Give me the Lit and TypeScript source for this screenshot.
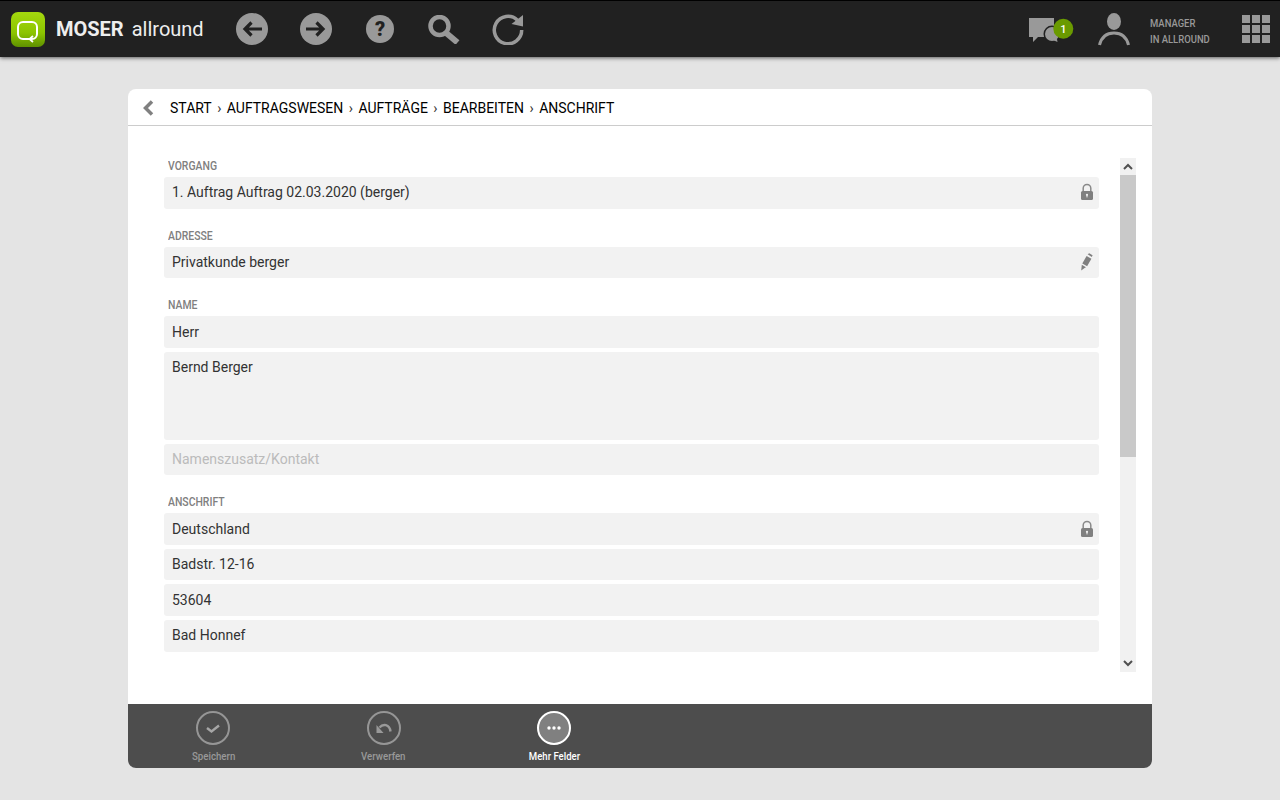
import { LitElement, html, css, svg } from "lit";
import { customElement } from "lit/decorators.js";

const lock = svg`<svg class="ficon" width="14" height="18" viewBox="0 0 14 18"><path d="M3.2 8V5.2a3.8 3.8 0 0 1 7.6 0V8" fill="none" stroke="#8a8a8a" stroke-width="1.5"/><rect x="1" y="8" width="12" height="9" rx="1.5" fill="#808080"/><circle cx="7" cy="11.8" r="1.1" fill="#f2f2f2"/><rect x="6.5" y="12" width="1" height="2.4" fill="#f2f2f2"/></svg>`;
const pencil = svg`<svg class="ficon" width="16" height="18" viewBox="0 0 16 18"><path d="M9.6 1.2l1.6-.9 3.4 2-.8 1.6z" fill="#808080"/><path d="M8.6 3l4.8 2.8-4.3 7.4-4.8-2.8z" fill="#808080"/><path d="M3.8 11.8l4.2 2.4-1.4.9-3.4 2.3z" fill="#808080"/></svg>`;

@customElement("app-root")
export class AppRoot extends LitElement {
  static styles = css`
    :host { display: block; width: 1280px; height: 800px; background: #e4e4e4; font-family: Roboto, sans-serif; overflow: hidden; color: #333; }
    .top { height: 56px; background: #212121; border-top: 1px solid #000; display: flex; align-items: center; box-shadow: 0 1px 4px rgba(0,0,0,.6); }
    .logo { margin-left: 11px; width: 34px; height: 35px; flex: none; display: block; }
    .brand { margin-left: 11px; font-size: 20px; color: #eee; width: 180px; white-space: nowrap; display: flex; gap: 8px; }
    .brand b { font-weight: 700; }
    .nav { display: flex; align-items: center; flex: 1; }
    .nav svg { display: block; flex: none; }
    .right { display: flex; align-items: center; }
    .mgr { font-size: 11px; line-height: 16px; color: #999; width: 92px; margin-left: 20px; padding-top: 6px; font-weight: 500; transform: scaleX(.86); transform-origin: left center; white-space: nowrap; }
    .grid9 { display: grid; grid-template-columns: repeat(3, 8px); gap: 2.2px; margin-right: 10px; }
    .grid9 i { height: 8px; background: #999; display: block; }

    .card { width: 1024px; height: 679px; margin: 32px auto 0; background: #fff; border-radius: 8px; display: flex; flex-direction: column; overflow: hidden; }
    .crumb { height: 35px; padding-top: 1px; border-bottom: 1px solid #ccc; display: flex; align-items: center; flex: none; font-size: 14px; color: #000; box-sizing: content-box; }
    .crumb svg { margin-left: 14px; margin-right: 16px; flex: none; }
    .crumb .sep { margin: 0 5.45px; color: #333; }
    .body { flex: 1; min-height: 0; display: flex; padding: 32px 16px 32px 36px; }
    .form { width: 935px; overflow: hidden; flex: none; padding-top: .95px; box-sizing: border-box; }
    .label { font-size: 12px; line-height: 15px; height: 15px; color: #808080; margin-left: 4px; margin-bottom: 3px; font-weight: 500; transform: scaleX(.87); transform-origin: left center; }
    .sec { margin-bottom: 20px; }
    .field { height: 31.6px; background: #f2f2f2; border-radius: 3px; display: flex; align-items: center; justify-content: space-between; padding: 0 4px .8px 8px; font-size: 14px; color: #333; box-sizing: border-box; }
    .field + .field { margin-top: 4px; }
    .tall { height: 87.9px; align-items: flex-start; padding-top: 7px; }
    .ph { color: #bbb; }
    .ficon { display: block; margin-right: 1px; flex: none; }
    .sb { width: 16px; margin-left: 21px; background: #f1f1f1; display: flex; flex-direction: column; justify-content: space-between; position: relative; flex: none; }
    .thumb { position: absolute; left: 0; right: 0; top: 17px; height: 282px; background: #c9c9c9; }
    .arrow { height: 17px; display: flex; align-items: center; justify-content: center; }
    .foot { height: 64px; flex: none; background: #4d4d4d; display: grid; grid-template-columns: repeat(6, 170.4px); }
    .btn { display: flex; flex-direction: column; align-items: center; padding-top: 7px; font-size: 11px; color: #999; font-weight: 500; }
    .btn .c { width: 34px; height: 34px; border-radius: 50%; border: 2px solid #969696; box-sizing: border-box; display: flex; align-items: center; justify-content: center; }
    .btn span { margin-top: 6px; line-height: 12px; transform: scaleX(.88); white-space: nowrap; }
    .btn.on { color: #fff; }
    .btn.on span { transform: scaleX(.87); }
    .btn.on .c { border-color: #fff; background: #808080; }
  `;

  render() {
    return html`
      <div class="top">
        <svg class="logo" viewBox="0 0 34 35">
          <defs><linearGradient id="lg" x1="0" y1="0" x2="0" y2="1"><stop offset="0" stop-color="#a4d80e"/><stop offset=".6" stop-color="#8cc400"/><stop offset="1" stop-color="#5e9000"/></linearGradient></defs>
          <rect width="34" height="35" rx="7" fill="url(#lg)"/>
          <path d="M18 27H12a5 5 0 0 1-5-5V15a5 5 0 0 1 5-5h9a5 5 0 0 1 5 5v7a5 5 0 0 1-5 5h-3" fill="none" stroke="#fff" stroke-width="2"/>
          <path d="M22 24l-3.500 3 3.500 3" fill="none" stroke="#fff" stroke-width="1.800"/>
        </svg>
        <div class="brand"><b>MOSER</b><span>allround</span></div>
        <div class="nav">
          <svg width="32" height="32" viewBox="0 0 32 32"><circle cx="16" cy="16" r="16" fill="#999"/><path d="M26 16H9M15.500 9.500L9 16l6.500 6.500" fill="none" stroke="#212121" stroke-width="3.200"/></svg>
          <svg style="margin-left:32px" width="32" height="32" viewBox="0 0 32 32"><circle cx="16" cy="16" r="16" fill="#999"/><path d="M6 16h17M16.500 9.500L23 16l-6.500 6.500" fill="none" stroke="#212121" stroke-width="3.200"/></svg>
          <svg style="margin-left:34px" width="28" height="28" viewBox="0 0 28 28"><circle cx="14" cy="14" r="14" fill="#999"/><text x="14" y="21" text-anchor="middle" font-family="Roboto, sans-serif" font-weight="900" font-size="20" fill="#212121">?</text></svg>
          <svg style="margin-left:34px" width="32" height="29" viewBox="0 0 32 29"><circle cx="11.500" cy="11" r="9" fill="none" stroke="#999" stroke-width="4.500"/><path d="M17 17l12.500 10.500" stroke="#999" stroke-width="6"/></svg>
          <svg style="margin-left:32px" width="33" height="31" viewBox="0 0 33 31"><path d="M25.500 6.200A13.700 13.700 0 1 0 29.700 16" fill="none" stroke="#999" stroke-width="3.500"/><path d="M31 1v11.500L19.500 10z" fill="#999"/></svg>
        </div>
        <div class="right">
          <svg width="45" height="28" viewBox="0 0 45 28" style="margin-right:24px">
            <path d="M0 3h25v19H9l-5 5v-5H0z" fill="#999"/>
            <circle cx="23" cy="19" r="8.500" fill="#212121"/>
            <circle cx="23" cy="19" r="7" fill="#999"/>
            <path d="M24 25l4.500 2-1-5z" fill="#999"/>
            <circle cx="34.300" cy="13.700" r="10" fill="#6a9a00"/>
            <text x="34.300" y="17.700" text-anchor="middle" font-family="Roboto, sans-serif" font-size="11" font-weight="500" fill="#fff">1</text>
          </svg>
          <svg width="32" height="33" viewBox="0 0 32 33" style="margin-top:1px">
            <ellipse cx="16" cy="8.500" rx="7" ry="8.500" fill="#999"/>
            <path d="M1.500 32c2-8 7.500-12 14.500-12s12.500 4 14.500 12" fill="none" stroke="#999" stroke-width="3"/>
          </svg>
          <div class="mgr">MANAGER<br />IN ALLROUND</div>
          <div class="grid9">${Array.from({ length: 9 }, () => html`<i></i>`)}</div>
        </div>
      </div>

      <div class="card">
        <div class="crumb">
          <svg width="12" height="16" viewBox="0 0 12 16"><path d="M10 1.500L3.500 8l6.500 6.500" fill="none" stroke="#808080" stroke-width="3.500"/></svg>
          START<span class="sep">›</span>AUFTRAGSWESEN<span class="sep">›</span>AUFTRÄGE<span class="sep">›</span>BEARBEITEN<span class="sep">›</span>ANSCHRIFT
        </div>
        <div class="body">
          <div class="form">
            <div class="sec">
              <div class="label">VORGANG</div>
              <div class="field">1. Auftrag Auftrag 02.03.2020 (berger)${lock}</div>
            </div>
            <div class="sec">
              <div class="label">ADRESSE</div>
              <div class="field">Privatkunde berger${pencil}</div>
            </div>
            <div class="sec">
              <div class="label">NAME</div>
              <div class="field">Herr</div>
              <div class="field tall">Bernd Berger</div>
              <div class="field ph">Namenszusatz/Kontakt</div>
            </div>
            <div class="sec">
              <div class="label">ANSCHRIFT</div>
              <div class="field">Deutschland${lock}</div>
              <div class="field">Badstr. 12-16</div>
              <div class="field">53604</div>
              <div class="field">Bad Honnef</div>
            </div>
          </div>
          <div class="sb">
            <div class="thumb"></div>
            <div class="arrow"><svg width="10" height="7" viewBox="0 0 10 7"><path d="M1 6l4-4 4 4" fill="none" stroke="#505050" stroke-width="2"/></svg></div>
            <div class="arrow"><svg width="10" height="7" viewBox="0 0 10 7"><path d="M1 1l4 4 4-4" fill="none" stroke="#505050" stroke-width="2"/></svg></div>
          </div>
        </div>
        <div class="foot">
          <div class="btn"><div class="c"><svg width="16" height="11" viewBox="0 0 16 11"><path d="M2 5l4.500 3.500L14 2.500" fill="none" stroke="#a6a6a6" stroke-width="2.400"/></svg></div><span>Speichern</span></div>
          <div class="btn"><div class="c"><svg width="18" height="12" viewBox="0 0 18 12"><path d="M4.500 5.500C8 1.500 14.500 2 15.500 9.500" fill="none" stroke="#999" stroke-width="2.400"/><path d="M1.500 3v8h7z" fill="#999"/></svg></div><span>Verwerfen</span></div>
          <div class="btn on"><div class="c"><svg width="16" height="4" viewBox="0 0 16 4"><circle cx="3" cy="2" r="1.700" fill="#fff"/><circle cx="8" cy="2" r="1.700" fill="#fff"/><circle cx="13" cy="2" r="1.700" fill="#fff"/></svg></div><span>Mehr Felder</span></div>
        </div>
      </div>
    `;
  }
}
